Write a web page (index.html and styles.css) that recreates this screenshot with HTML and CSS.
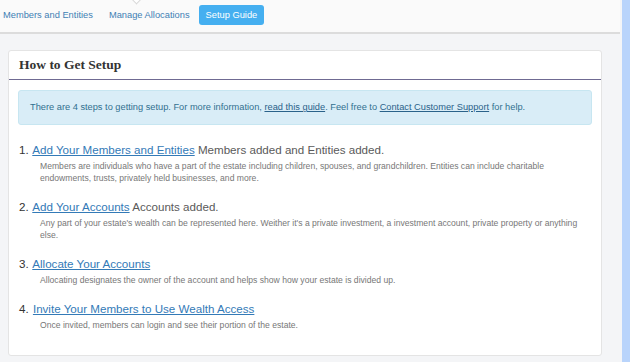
FILE: index.html
```html
<!DOCTYPE html>
<html lang="en">
<head>
  <meta charset="UTF-8" />
  <title>Setup Guide</title>
  <link rel="stylesheet" href="styles.css">
</head>
<body>

<div class="layout">
  <div class="main">
    <nav class="tabs">
      <span class="caret"></span>
      <a class="tab" href="#">Members and Entities</a>
      <a class="tab" href="#">Manage Allocations</a>
      <a class="tab active" href="#">Setup Guide</a>
    </nav>

    <div class="content">
      <div class="card">
        <div class="card-header">
          <h2>How to Get Setup</h2>
        </div>

        <div class="card-body">
          <div class="alert">
            There are 4 steps to getting setup. For more information, <a href="#">read this guide</a>. Feel free to <a href="#">Contact Customer Support</a> for help.
          </div>

          <div class="steps">
            <div class="step">
              <div class="step-title"><span class="num">1.</span> <a href="#">Add Your Members and Entities</a> Members added and Entities added.</div>
              <p class="step-desc">Members are individuals who have a part of the estate including children, spouses, and grandchildren. Entities can include charitable endowments, trusts, privately held businesses, and more.</p>
            </div>
            <div class="step">
              <div class="step-title"><span class="num">2.</span> <a href="#">Add Your Accounts</a> Accounts added.</div>
              <p class="step-desc">Any part of your estate's wealth can be represented here. Weither it's a private investment, a investment account, private property or anything else.</p>
            </div>
            <div class="step">
              <div class="step-title"><span class="num">3.</span> <a href="#">Allocate Your Accounts</a></div>
              <p class="step-desc">Allocating designates the owner of the account and helps show how your estate is divided up.</p>
            </div>
            <div class="step">
              <div class="step-title"><span class="num">4.</span> <a href="#">Invite Your Members to Use Wealth Access</a></div>
              <p class="step-desc">Once invited, members can login and see their portion of the estate.</p>
            </div>
          </div>
        </div>
      </div>
    </div>
  </div>
  <div class="strip"></div>
</div>

</body>
</html>
```

FILE: styles.css
```css
* {
  margin: 0;
  padding: 0;
  box-sizing: border-box;
}

body {
  font-family: 'Liberation Sans', Arial, sans-serif;
  background: #f4f5f7;
  width: 630px;
  height: 362px;
  overflow: hidden;
}

.layout {
  display: flex;
  height: 362px;
}

.main {
  width: 620px;
}

.strip {
  width: 8px;
  margin-left: 2px;
  background: #b9d4fb;
}

/* top tabs */
.tabs {
  position: relative;
  display: flex;
  align-items: center;
  gap: 16px;
  height: 34px;
  padding: 0 0 2px 3px;
  background: #fafafa;
  border-bottom: 2px solid #dcdcdc;
}

.tab {
  font-size: 9.3px;
  color: #3f7fb4;
  text-decoration: none;
}

.tab.active {
  margin-left: -7px;
  background: #45aff0;
  color: #fff;
  padding: 5px 7px;
  border-radius: 3px;
  line-height: 10px;
}

.caret {
  position: absolute;
  left: 133px;
  top: -4px;
  width: 7px;
  height: 7px;
  background: #fff;
  border-right: 1px solid #d8d8d8;
  border-bottom: 1px solid #d8d8d8;
  transform: rotate(45deg);
}

.content {
  padding: 16px 18px 0 8px;
}

.card {
  background: #fff;
  border: 1px solid #e4e4e4;
  border-radius: 3px;
  height: 306px;
}

.card-header {
  height: 29px;
  padding: 6px 10px 0;
  border-bottom: 1px solid #6f6a92;
}

.card-header h2 {
  font-family: 'Liberation Serif', 'Times New Roman', serif;
  font-size: 13.5px;
  font-weight: 700;
  color: #333;
}

.card-body {
  padding: 10px 9px 0;
}

.alert {
  background: #d9edf7;
  border: 1px solid #c7e6f1;
  border-radius: 3px;
  padding: 0 11px;
  height: 35px;
  line-height: 33px;
  font-size: 9.25px;
  color: #31708f;
}

.alert a {
  color: #2a628a;
}

.steps {
  padding: 17px 0 0 1px;
  display: flex;
  flex-direction: column;
  gap: 15px;
}

.step-title {
  font-size: 11.6px;
  line-height: 15px;
  color: #5a5a5a;
}

.step-title .num {
  color: #333;
  margin-right: 1px;
}

.step-title a {
  color: #337ab7;
}

.step-desc {
  margin: 3px 0 0 21px;
  font-size: 8.6px;
  line-height: 12px;
  color: #777;
  padding-right: 8px;
}
```
